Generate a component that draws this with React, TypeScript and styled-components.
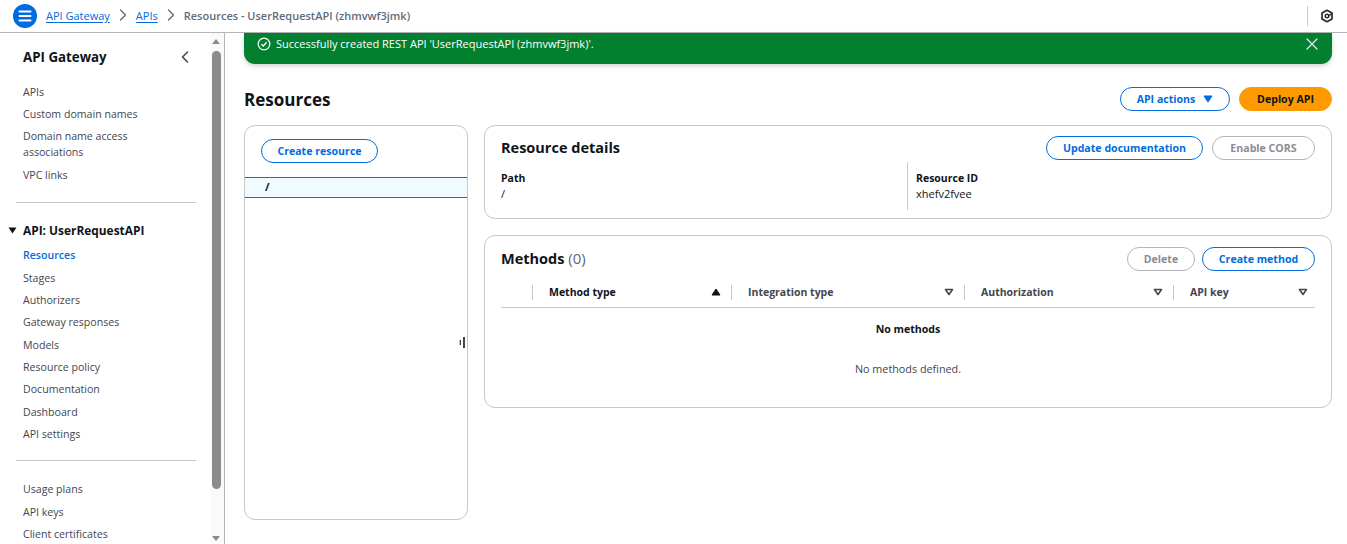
import styled, { createGlobalStyle } from "styled-components";
import { ChevronLeft, ChevronRight, X } from "lucide-react";

const GlobalStyle = createGlobalStyle`
  html, body { margin: 0; padding: 0; background: #fff; height: 544px; overflow: hidden; }
  body { font-family: "Open Sans", "Noto Sans", sans-serif; font-size: 10.8px; color: #0f141a; }
`;

const Page = styled.div`
  width: 1347px;
  height: 544px;
  display: flex;
  flex-direction: column;
  overflow: hidden;
`;

const TopBar = styled.header`
  height: 32px;
  flex: none;
  display: flex;
  align-items: center;
  padding: 0 13px;
  border-bottom: 1px solid #b4b4bb;
`;

const MenuButton = styled.div`
  width: 24px;
  height: 24px;
  border-radius: 50%;
  background: #006ce0;
  display: flex;
  align-items: center;
  justify-content: center;
  margin-right: 9px;
`;

const Crumbs = styled.nav`
  display: flex;
  align-items: center;
  font-size: 11px;
  flex: 1;
  padding-bottom: 2px;
`;

const CrumbLink = styled.a`
  color: #006ce0;
  text-decoration: underline;
  text-underline-offset: 2px;
`;

const CrumbSep = styled.span`
  display: flex;
  width: 26px;
  justify-content: center;
  color: #656871;
`;

const CrumbCurrent = styled.span`
  color: #5f6b7a;
  font-weight: 600;
`;

const TopRight = styled.div`
  display: flex;
  align-items: center;
  height: 20px;
  border-left: 1px solid #c6c6cd;
  padding-left: 12px;
`;

const Body = styled.div`
  flex: 1;
  display: flex;
  min-height: 0;
`;

const Sidebar = styled.aside`
  width: 225px;
  flex: none;
  position: relative;
  border-right: 1px solid #b4b4bb;
  overflow: hidden;
  padding: 14px 0 0 23px;
  box-sizing: border-box;
`;

const SideHead = styled.div`
  display: flex;
  align-items: center;
  justify-content: space-between;
  width: 172px;
  height: 20px;
  font-size: 13.3px;
  font-weight: 700;
  margin-bottom: 13.7px;
`;

const NavList = styled.div`
  display: flex;
  flex-direction: column;
`;

const NavItem = styled.div<{ $active?: boolean }>`
  font-size: 10.6px;
  line-height: 16px;
  padding: 3px 0 3.375px;
  width: 150px;
  color: ${(p) => (p.$active ? "#006ce0" : "#424650")};
  font-weight: ${(p) => (p.$active ? 600 : 400)};
`;

const Divider = styled.div<{ $top: number; $bottom: number }>`
  width: 180px;
  height: 1px;
  background: #c6c6cd;
  margin: ${(p) => p.$top}px 0 ${(p) => p.$bottom}px -7px;
`;

const SectionHead = styled.div`
  display: flex;
  align-items: center;
  font-size: 11.9px;
  font-weight: 700;
  height: 20px;
  margin: 0 0 4px -15px;
  gap: 6px;
`;

const Track = styled.div`
  position: absolute;
  top: 0;
  right: 0;
  bottom: 0;
  width: 13px;
  background: #fafafa;
`;

const Thumb = styled.div`
  position: absolute;
  top: 18px;
  left: 1px;
  width: 9px;
  height: 438px;
  background: #8c8c8c;
  border-radius: 5px;
`;

const ArrowUp = styled.div`
  position: absolute;
  top: 6px;
  left: 1px;
  border-left: 4.5px solid transparent;
  border-right: 4.5px solid transparent;
  border-bottom: 5px solid #8c8c8c;
`;

const ArrowDown = styled.div`
  position: absolute;
  bottom: 3px;
  left: 1px;
  border-left: 4.5px solid transparent;
  border-right: 4.5px solid transparent;
  border-top: 5px solid #8c8c8c;
`;

const Main = styled.main`
  flex: 1;
  min-width: 0;
  padding: 0 15px 0 19px;
`;

const Flash = styled.div`
  height: 31px;
  background: #037f30;
  border-radius: 0 0 11px 11px;
  box-shadow: 0 2px 5px rgba(0, 7, 22, 0.18);
  display: flex;
  align-items: center;
  color: #fff;
  padding: 0 10px 9px 13px;
  gap: 5px;
  font-size: 11px;
  font-weight: 500;
  box-sizing: border-box;
`;

const FlashText = styled.span`
  flex: 1;
  padding-bottom: 2px;
`;

const TitleRow = styled.div`
  display: flex;
  align-items: center;
  justify-content: space-between;
  margin-top: 23px;
  height: 24px;
`;

const PageTitle = styled.h1`
  margin: 0;
  font-size: 17px;
  font-weight: 700;
`;

const Actions = styled.div`
  display: flex;
  align-items: center;
  gap: 9px;
`;

const Button = styled.button<{ $variant?: "normal" | "primary" | "disabled"; $width: number }>`
  width: ${(p) => p.$width}px;
  height: 24px;
  box-sizing: border-box;
  border-radius: 12px;
  padding: 0;
  font-family: inherit;
  font-size: 10.6px;
  font-weight: 700;
  white-space: nowrap;
  display: inline-flex;
  align-items: center;
  justify-content: center;
  gap: 8px;
  background: ${(p) => (p.$variant === "primary" ? "#ff9900" : "#fff")};
  color: ${(p) =>
    p.$variant === "primary" ? "#0f141a" : p.$variant === "disabled" ? "#8c8c94" : "#006ce0"};
  border: 1px solid
    ${(p) =>
      p.$variant === "primary" ? "#ff9900" : p.$variant === "disabled" ? "#b4b4bb" : "#006ce0"};
`;

const Split = styled.div`
  display: flex;
  margin-top: 14px;
  gap: 16px;
  align-items: flex-start;
`;

const Panel = styled.section`
  border: 1px solid #c6c6cd;
  border-radius: 11px;
  box-sizing: border-box;
  background: #fff;
`;

const TreePanel = styled(Panel)`
  width: 224px;
  height: 395px;
  flex: none;
  position: relative;
  overflow: hidden;
`;

const TreeTop = styled.div`
  padding: 13px 16px;
  height: 51px;
  box-sizing: border-box;
`;

const TreeRow = styled.div`
  height: 21px;
  box-sizing: border-box;
  border-top: 1px solid #0972d3;
  border-bottom: 1px solid #0972d3;
  background: #f0fbff;
  padding-left: 20px;
  line-height: 18px;
  font-weight: 700;
  font-size: 11px;
`;

const Handle = styled.div`
  position: absolute;
  right: 2px;
  top: 211px;
  height: 11px;
  width: 2px;
  background: #424650;
  &::before {
    content: "";
    position: absolute;
    left: -4px;
    top: 3px;
    width: 2px;
    height: 5px;
    background: linear-gradient(90deg, #c0c0c6 50%, #424650 50%);
  }
`;

const Column = styled.div`
  flex: 1;
  display: flex;
  flex-direction: column;
  gap: 16px;
  min-width: 0;
`;

const DetailsPanel = styled(Panel)`
  height: 94px;
  padding: 10px 16px 0;
`;

const MethodsPanel = styled(Panel)`
  height: 173px;
  padding: 11px 16px 0;
`;

const PanelHead = styled.div`
  display: flex;
  align-items: center;
  justify-content: space-between;
  height: 24px;
`;

const PanelTitle = styled.h2`
  margin: 0 0 2px;
  font-size: 14.5px;
  font-weight: 700;
  & span {
    font-size: 15px;
    font-weight: 400;
    color: #656871;
  }
`;

const PanelButtons = styled.div<{ $gap: number }>`
  display: flex;
  gap: ${(p) => p.$gap}px;
`;

const DetailGrid = styled.div`
  display: grid;
  grid-template-columns: 406px 1fr;
  margin-top: 2px;
`;

const DetailCell = styled.div<{ $split?: boolean }>`
  height: 48px;
  padding-top: 8px;
  box-sizing: border-box;
  line-height: 16px;
  font-size: 11px;
  ${(p) => p.$split && "border-left: 1px solid #c6c6cd; padding-left: 8px;"}
`;

const DetailLabel = styled.div`
  font-size: 10.5px;
  font-weight: 700;
`;

const TableHead = styled.div`
  display: grid;
  grid-template-columns: 32px 199px 233px 209px 1fr;
  height: 32px;
  margin-top: 5px;
  align-items: center;
  border-bottom: 1px solid #c6c6cd;
  box-sizing: border-box;
  padding-top: 1px;
`;

const HeadCell = styled.div<{ $sorted?: boolean }>`
  height: 15px;
  display: flex;
  align-items: center;
  justify-content: space-between;
  font-size: 10.5px;
  font-weight: 700;
  padding: 0 10px 0 16px;
  color: ${(p) => (p.$sorted ? "#0f141a" : "#424650")};
  border-right: 1px solid #c6c6cd;
  &:last-child {
    border-right: none;
    padding-right: 7px;
  }
`;

const EmptyTitle = styled.div`
  text-align: center;
  font-size: 10.6px;
  font-weight: 700;
  margin-top: 13px;
  line-height: 16px;
`;

const EmptyText = styled.div`
  text-align: center;
  margin-top: 24px;
  line-height: 16px;
  color: #424650;
`;

const sideTop = ["APIs", "Custom domain names", "Domain name access associations", "VPC links"];
const sideApi = [
  "Resources",
  "Stages",
  "Authorizers",
  "Gateway responses",
  "Models",
  "Resource policy",
  "Documentation",
  "Dashboard",
  "API settings",
];
const sideBottom = ["Usage plans", "API keys", "Client certificates"];

const SortIcon = ({ sorted }: { sorted?: boolean }) => (
  <svg width="10" height="8" viewBox="0 0 10 8">
    {sorted ? (
      <path d="M5 1 L9 7 H1 Z" fill="#0f141a" stroke="#0f141a" strokeLinejoin="round" />
    ) : (
      <path d="M1.5 1.5 H8.5 L5 6.5 Z" fill="none" stroke="#424650" strokeWidth="1.6" strokeLinejoin="round" />
    )}
  </svg>
);

export default function App() {
  return (
    <Page>
      <GlobalStyle />
      <TopBar>
        <MenuButton>
          <svg width="14" height="12" viewBox="0 0 14 12">
            <path d="M1.5 1.5 H12.5 M1.5 6 H12.5 M1.5 10.5 H12.5" stroke="#fff" strokeWidth="2" strokeLinecap="round" />
          </svg>
        </MenuButton>
        <Crumbs>
          <CrumbLink>API Gateway</CrumbLink>
          <CrumbSep>
            <ChevronRight size={20} strokeWidth={1.5} />
          </CrumbSep>
          <CrumbLink>APIs</CrumbLink>
          <CrumbSep>
            <ChevronRight size={20} strokeWidth={1.5} />
          </CrumbSep>
          <CrumbCurrent>Resources - UserRequestAPI (zhmvwf3jmk)</CrumbCurrent>
        </Crumbs>
        <TopRight>
          <svg width="14" height="14" viewBox="0 0 14 14">
            <path d="M7 1.3 L12 4.1 V9.9 L7 12.7 L2 9.9 V4.1 Z" fill="none" stroke="#232b37" strokeWidth="1.7" strokeLinejoin="round" />
            <circle cx="7" cy="7" r="1.8" fill="none" stroke="#232b37" strokeWidth="1.4" />
            <path d="M8.5 7 L12 4.5" stroke="#232b37" strokeWidth="1.5" />
          </svg>
        </TopRight>
      </TopBar>
      <Body>
        <Sidebar>
          <SideHead>
            API Gateway
            <ChevronLeft size={20} color="#424650" strokeWidth={1.8} />
          </SideHead>
          <NavList>
            {sideTop.map((item) => (
              <NavItem key={item}>{item}</NavItem>
            ))}
          </NavList>
          <Divider $top={15.6} $bottom={17.4} />
          <SectionHead>
            <svg width="9" height="7" viewBox="0 0 9 7">
              <path d="M0.5 0.5 H8.5 L4.5 6.5 Z" fill="#0f141a" />
            </svg>
            API: UserRequestAPI
          </SectionHead>
          <NavList>
            {sideApi.map((item) => (
              <NavItem key={item} $active={item === "Resources"}>
                {item}
              </NavItem>
            ))}
          </NavList>
          <Divider $top={14.6} $bottom={17.2} />
          <NavList>
            {sideBottom.map((item) => (
              <NavItem key={item}>{item}</NavItem>
            ))}
          </NavList>
          <Track>
            <ArrowUp />
            <Thumb />
            <ArrowDown />
          </Track>
        </Sidebar>
        <Main>
          <Flash>
            <svg width="14" height="14" viewBox="0 0 14 14">
              <circle cx="7" cy="7" r="5.8" fill="none" stroke="#fff" strokeWidth="1.3" />
              <path d="M4.4 7.2 L6.3 9 L9.6 5.2" fill="none" stroke="#fff" strokeWidth="1.3" />
            </svg>
            <FlashText>Successfully created REST API 'UserRequestAPI (zhmvwf3jmk)'.</FlashText>
            <X size={20} color="#e4e7ea" strokeWidth={1.5} />
          </Flash>
          <TitleRow>
            <PageTitle>Resources</PageTitle>
            <Actions>
              <Button $width={110}>
                API actions
                <svg width="10" height="8" viewBox="0 0 10 8">
                  <path d="M1 1 H9 L5 7 Z" fill="#006ce0" stroke="#006ce0" strokeLinejoin="round" />
                </svg>
              </Button>
              <Button $variant="primary" $width={93}>
                Deploy API
              </Button>
            </Actions>
          </TitleRow>
          <Split>
            <TreePanel>
              <TreeTop>
                <Button $width={117}>Create resource</Button>
              </TreeTop>
              <TreeRow>/</TreeRow>
              <Handle />
            </TreePanel>
            <Column>
              <DetailsPanel>
                <PanelHead>
                  <PanelTitle>Resource details</PanelTitle>
                  <PanelButtons $gap={9}>
                    <Button $width={157}>Update documentation</Button>
                    <Button $variant="disabled" $width={103}>
                      Enable CORS
                    </Button>
                  </PanelButtons>
                </PanelHead>
                <DetailGrid>
                  <DetailCell>
                    <DetailLabel>Path</DetailLabel>/
                  </DetailCell>
                  <DetailCell $split>
                    <DetailLabel>Resource ID</DetailLabel>xhefv2fvee
                  </DetailCell>
                </DetailGrid>
              </DetailsPanel>
              <MethodsPanel>
                <PanelHead>
                  <PanelTitle>
                    Methods <span>(0)</span>
                  </PanelTitle>
                  <PanelButtons $gap={7}>
                    <Button $variant="disabled" $width={68}>
                      Delete
                    </Button>
                    <Button $width={113}>Create method</Button>
                  </PanelButtons>
                </PanelHead>
                <TableHead>
                  <HeadCell />
                  <HeadCell $sorted>
                    Method type
                    <SortIcon sorted />
                  </HeadCell>
                  <HeadCell>
                    Integration type
                    <SortIcon />
                  </HeadCell>
                  <HeadCell>
                    Authorization
                    <SortIcon />
                  </HeadCell>
                  <HeadCell>
                    API key
                    <SortIcon />
                  </HeadCell>
                </TableHead>
                <EmptyTitle>No methods</EmptyTitle>
                <EmptyText>No methods defined.</EmptyText>
              </MethodsPanel>
            </Column>
          </Split>
        </Main>
      </Body>
    </Page>
  );
}
